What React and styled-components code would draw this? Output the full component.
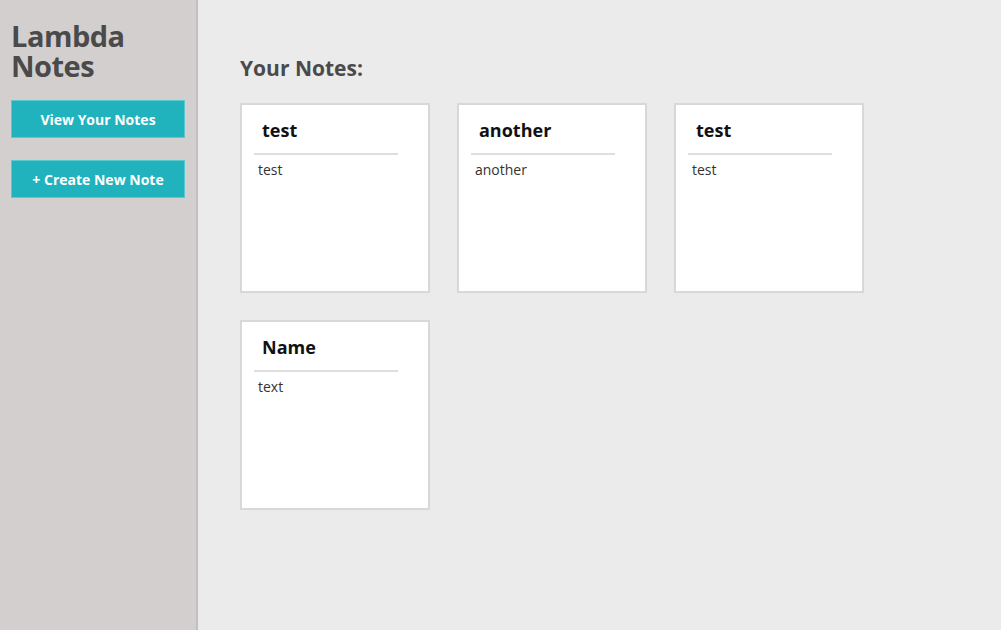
import React from 'react';
import styled, { createGlobalStyle } from 'styled-components';

const notes = [
    { id: 1, title: 'test', text: 'test' },
    { id: 2, title: 'another', text: 'another' },
    { id: 3, title: 'test', text: 'test' },
    { id: 4, title: 'Name', text: 'text' },
];

export default function App() {
    return (
        <>
            <GlobalStyle />
            <Page>
                <Sidebar>
                    <Title>Lambda<br />Notes</Title>
                    <NavButton>View Your Notes</NavButton>
                    <NavButton>+ Create New Note</NavButton>
                </Sidebar>
                <Main>
                    <Heading>Your Notes:</Heading>
                    <NoteList>
                        {notes.map((note) => (
                            <NoteCard key={note.id}>
                                <NoteTitle>{note.title}</NoteTitle>
                                <Divider />
                                <NoteText>{note.text}</NoteText>
                            </NoteCard>
                        ))}
                    </NoteList>
                </Main>
            </Page>
        </>
    );
}

const GlobalStyle = createGlobalStyle`
body {
    margin: 0;
    font-family: "Open Sans", "Noto Sans", sans-serif;
    background: #ebebeb;
}
`;

const Page = styled.div`
display: flex;
min-height: 630px;
`;

const Sidebar = styled.div`
width: 198px;
flex-shrink: 0;
background: #d3cfcf;
border-right: 2px solid #c3bfbf;
padding: 21px 0 0 11px;
box-sizing: border-box;
display: flex;
flex-direction: column;
align-items: flex-start;
`;

const Title = styled.h1`
margin: 0 0 19px;
font-size: 29px;
line-height: 30px;
font-weight: 700;
color: #4a4a4a;
letter-spacing: -0.5px;
`;

const NavButton = styled.button`
width: 174px;
height: 38px;
margin-bottom: 22px;
border: 1px solid #5ec8cf;
background: #20b2bd;
color: #fff;
font-family: inherit;
font-size: 14px;
font-weight: 700;
padding: 0;
cursor: pointer;
`;

const Main = styled.div`
flex: 1;
padding: 0 0 0 42px;
`;

const Heading = styled.h2`
margin: 55px 0 0;
font-size: 21px;
line-height: 27px;
font-weight: 700;
color: #4a4a4a;
`;

const NoteList = styled.div`
display: flex;
flex-wrap: wrap;
gap: 27px;
margin-top: 21px;
`;

const NoteCard = styled.div`
width: 190px;
height: 190px;
box-sizing: border-box;
background: #fff;
border: 2px solid #d8d8d8;
`;

const NoteTitle = styled.h3`
margin: 13px 0 0 20px;
font-size: 18px;
line-height: 25px;
font-weight: 700;
color: #111;
`;

const Divider = styled.div`
width: 144px;
height: 2px;
margin: 10px 0 0 12px;
background: #dedede;
`;

const NoteText = styled.div`
margin: 5px 0 0 16px;
font-size: 14px;
line-height: 20px;
color: #333;
`;
